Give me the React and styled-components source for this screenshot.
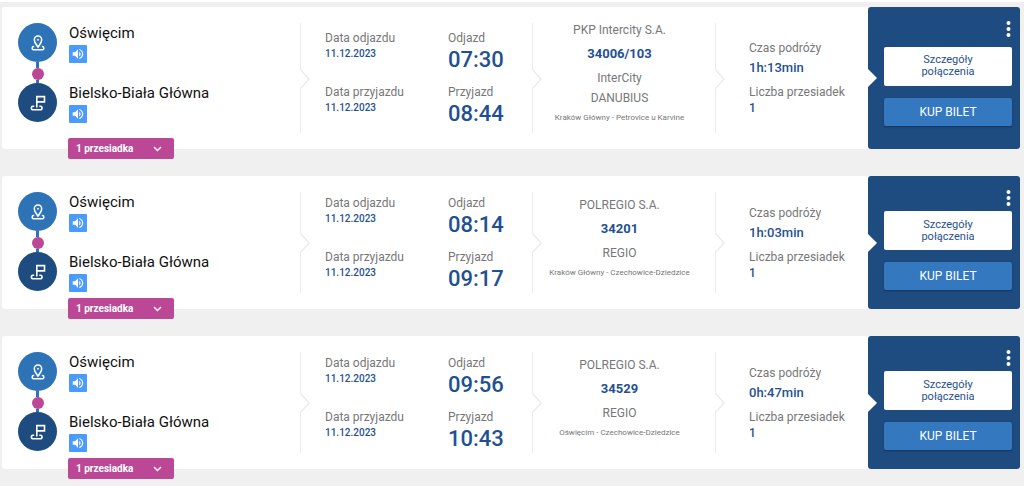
import React from "react";
import styled, { createGlobalStyle, css } from "styled-components";

const color = {
  page: "#f0f0f0",
  line: "#ececec",
  label: "#777777",
  navy: "#1e4b80",
  value: "#1f5192",
  blue: "#2f73b7",
  buy: "#3479c0",
  sky: "#4b9bff",
  pink: "#bb4796",
};

const GlobalStyle = createGlobalStyle`
  *, *::before, *::after { box-sizing: border-box; }
  body {
    margin: 0;
    background: #fff;
    font-family: Roboto, "Liberation Sans", sans-serif;
  }
  button { font: inherit; border: 0; padding: 0; cursor: pointer; }
  h2, p, dl, dt, dd, ol { margin: 0; padding: 0; }
  svg { display: block; }
`;

const Results = styled.main`
  display: flex;
  flex-direction: column;
  gap: 27px;
  margin: 2px 0;
  padding: 5px 4px 17px 2px;
  background: ${color.page};
`;

const Card = styled.article`
  position: relative;
  display: grid;
  grid-template-columns: 298fr 232fr 183fr 153fr 152px;
  background: #fff;
  border-radius: 3px;
`;

const Route = styled.section`
  display: flex;
  gap: 12px;
  padding: 16px 16px 17px;
`;

const Track = styled.div`
  display: flex;
  flex-direction: column;
  align-items: center;
`;

const Stop = styled.span`
  display: grid;
  place-items: center;
  width: 39px;
  height: 39px;
  border-radius: 50%;
  background: ${(p) => (p.$end ? color.navy : color.blue)};
`;

const Rail = styled.span`
  width: 3px;
  height: ${(p) => p.$length}px;
  background: ${color.blue};
`;

const ChangeDot = styled.span`
  width: 12px;
  height: 12px;
  border-radius: 50%;
  background: ${color.pink};
`;

const Stations = styled.ol`
  display: flex;
  flex-direction: column;
  gap: 20px;
  list-style: none;
`;

const Station = styled.li`
  display: flex;
  flex-direction: column;
  align-items: flex-start;
  gap: 2px;
  font-size: 15px;
  line-height: 20px;
  color: #111;
  white-space: nowrap;
`;

const ListenButton = styled.button`
  display: grid;
  place-items: center;
  width: 18px;
  height: 18px;
  border-radius: 1px;
  background: ${color.sky};
  color: #fff;
`;

const Transfers = styled.button`
  position: absolute;
  left: 66px;
  bottom: -10px;
  display: flex;
  align-items: center;
  justify-content: space-between;
  width: 106px;
  height: 21px;
  && { padding: 0 12px 0 8px; }
  border-radius: 2px;
  background: ${color.pink};
  color: #fff;
  && { font-size: 10px; font-weight: 700; }
`;

const Column = styled.section`
  display: flex;
  min-width: 0;
`;

const Divider = styled.span`
  flex: none;
  display: flex;
  flex-direction: column;
  width: 10px;
  margin: 16px 0 15px;
  &::before,
  &::after {
    content: "";
    flex: 1;
    width: 1px;
    background: ${color.line};
  }
`;

const Times = styled.dl`
  display: grid;
  grid-template-columns: 123px auto;
  align-content: center;
  row-gap: 10px;
  padding: 2px 0 0 15px;
`;

const Duration = styled.dl`
  display: flex;
  flex-direction: column;
  justify-content: center;
  gap: 4px;
  padding-left: 24px;
`;

const Label = styled.dt`
  font-size: 12px;
  line-height: 16px;
  color: ${color.label};
  white-space: nowrap;
`;

const sizes = {
  small: css`font-size: 10px; line-height: 16px;`,
  medium: css`font-size: 13px; line-height: 24px;`,
  count: css`font-size: 12px; line-height: 16px;`,
  large: css`font-size: 22px; line-height: 28px;`,
};

const Value = styled.dd`
  font-weight: 500;
  color: ${color.value};
  ${(p) => sizes[p.$size]}
`;

const Train = styled.div`
  flex: 1;
  display: flex;
  flex-direction: column;
  justify-content: center;
  padding: 13px 18px 21px 0;
  font-size: 12px;
  line-height: 20px;
  text-align: center;
  color: ${color.label};
  white-space: nowrap;
`;

const TrainNumber = styled.h2`
  margin: 4px 0;
  font-size: 13px;
  font-weight: 700;
  line-height: 20px;
  color: ${color.value};
`;

const Relation = styled.p`
  font-size: 8px;
`;

const Actions = styled.aside`
  position: relative;
  display: flex;
  flex-direction: column;
  padding: 14px 8px 14px 16px;
  border-radius: 3px;
  background: ${color.navy};
  &::before {
    content: "";
    position: absolute;
    left: 0;
    top: 50%;
    margin-top: -9px;
    border: 9px solid transparent;
    border-left-color: #fff;
    border-right: 0;
  }
`;

const MenuButton = styled.button`
  align-self: flex-end;
  background: none;
  color: #fff;
`;

const ActionList = styled.div`
  flex: 1;
  display: flex;
  flex-direction: column;
  justify-content: center;
  gap: 12px;
`;

const ActionButton = styled.button`
  height: ${(p) => (p.$primary ? 28 : 39)}px;
  && {
    padding: 0 32px;
    font-size: ${(p) => (p.$primary ? 12 : 11)}px;
    line-height: 12px;
  }
  border-radius: 2px;
  background: ${(p) => (p.$primary ? color.buy : "#fff")};
  color: ${(p) => (p.$primary ? "#fff" : color.value)};
  box-shadow: ${(p) => (p.$primary ? "0 1px 2px rgba(0, 0, 0, 0.3)" : "none")};
`;

const PinIcon = () => (
  <svg width="14" height="18" viewBox="0 0 14 18" fill="none" stroke="#fff" strokeWidth="1.5" aria-hidden="true">
    <path d="M7 13.2C5.2 10.400 3.300 8.200 3.300 5.900a3.700 4 0 0 1 7.400 0C10.700 8.200 8.800 10.400 7 13.200Z" />
    <circle cx="7" cy="5.800" r=".6" strokeWidth="1" />
    <path d="M3.200 12.500H2.600a1.400 1.400 0 0 0-1.400 1.400v.5a1.400 1.400 0 0 0 1.400 1.400h8.800a1.400 1.400 0 0 0 1.400-1.400v-.5a1.400 1.400 0 0 0-1.400-1.400h-.6" />
  </svg>
);

const FlagIcon = () => (
  <svg width="16" height="18" viewBox="0 0 16 18" fill="none" stroke="#fff" strokeWidth="1.6" aria-hidden="true">
    <path d="M6.800 13.500V2.600h7.700v5.300H6.800" />
    <path d="M4.200 12.300H2.900a1.500 1.500 0 0 0-1.500 1.500v.5a1.500 1.500 0 0 0 1.500 1.500h7.600a1.500 1.500 0 0 0 1.500-1.500v-.5a1.500 1.500 0 0 0-1.500-1.500H9.300" />
  </svg>
);

const SpeakerIcon = () => (
  <svg width="14" height="14" viewBox="0 0 24 24" fill="currentColor" aria-hidden="true">
    <path d="M3 9v6h4l5 5V4L7 9H3zm13.500 3A4.500 4.500 0 0 0 14 7.970v8.050c1.480-.73 2.500-2.250 2.500-4.020zM14 3.230v2.060c2.890.86 5 3.540 5 6.710s-2.110 5.850-5 6.710v2.060c4.010-.91 7-4.490 7-8.770s-2.990-7.860-7-8.770z" />
  </svg>
);

const ChevronIcon = () => (
  <svg width="9" height="6" viewBox="0 0 9 6" fill="none" stroke="currentColor" strokeWidth="1.500" aria-hidden="true">
    <path d="M1 1l3.500 3.500L8 1" />
  </svg>
);

const DotsIcon = () => (
  <svg width="7" height="16" viewBox="0 0 7 16" fill="currentColor" aria-hidden="true">
    <circle cx="3.500" cy="2" r="2" />
    <circle cx="3.500" cy="8" r="2" />
    <circle cx="3.500" cy="14" r="2" />
  </svg>
);

const Separator = () => (
  <Divider aria-hidden="true">
    <svg width="10" height="20" viewBox="0 0 10 20" fill="none" stroke={color.line} strokeWidth="1.500">
      <path d="M.5 0v.500L9 10 .5 19.500v.500" />
    </svg>
  </Divider>
);

const connections = [
  {
    departure: "07:30",
    arrival: "08:44",
    carrier: "PKP Intercity S.A.",
    number: "34006/103",
    category: ["InterCity", "DANUBIUS"],
    relation: "Kraków Główny - Petrovice u Karvine",
    duration: "1h:13min",
  },
  {
    departure: "08:14",
    arrival: "09:17",
    carrier: "POLREGIO S.A.",
    number: "34201",
    category: ["REGIO"],
    relation: "Kraków Główny - Czechowice-Dziedzice",
    duration: "1h:03min",
  },
  {
    departure: "09:56",
    arrival: "10:43",
    carrier: "POLREGIO S.A.",
    number: "34529",
    category: ["REGIO"],
    relation: "Oświęcim - Czechowice-Dziedzice",
    duration: "0h:47min",
  },
];

const Field = ({ label, value, size }) => (
  <div>
    <Label>{label}</Label>
    <Value $size={size}>{value}</Value>
  </div>
);

const StationRow = ({ name }) => (
  <Station>
    {name}
    <ListenButton type="button" aria-label={name}>
      <SpeakerIcon />
    </ListenButton>
  </Station>
);

const Connection = ({ item }) => (
  <Card>
    <Route>
      <Track aria-hidden="true">
        <Stop><PinIcon /></Stop>
        <Rail $length={6} />
        <ChangeDot />
        <Rail $length={3} />
        <Stop $end><FlagIcon /></Stop>
      </Track>
      <Stations>
        <StationRow name="Oświęcim" />
        <StationRow name="Bielsko-Biała Główna" />
      </Stations>
    </Route>
    <Column>
      <Separator />
      <Times>
        <Field label="Data odjazdu" value="11.12.2023" size="small" />
        <Field label="Odjazd" value={item.departure} size="large" />
        <Field label="Data przyjazdu" value="11.12.2023" size="small" />
        <Field label="Przyjazd" value={item.arrival} size="large" />
      </Times>
    </Column>
    <Column>
      <Separator />
      <Train>
        <p>{item.carrier}</p>
        <TrainNumber>{item.number}</TrainNumber>
        {item.category.map((line) => <p key={line}>{line}</p>)}
        <Relation>{item.relation}</Relation>
      </Train>
    </Column>
    <Column>
      <Separator />
      <Duration>
        <Field label="Czas podróży" value={item.duration} size="medium" />
        <Field label="Liczba przesiadek" value="1" size="count" />
      </Duration>
    </Column>
    <Actions>
      <MenuButton type="button" aria-label="Menu"><DotsIcon /></MenuButton>
      <ActionList>
        <ActionButton type="button">Szczegóły połączenia</ActionButton>
        <ActionButton type="button" $primary>KUP BILET</ActionButton>
      </ActionList>
    </Actions>
    <Transfers type="button" aria-expanded="false">
      1 przesiadka
      <ChevronIcon />
    </Transfers>
  </Card>
);

export default function App() {
  return (
    <>
      <GlobalStyle />
      <Results>
        {connections.map((item) => <Connection key={item.departure} item={item} />)}
      </Results>
    </>
  );
}
